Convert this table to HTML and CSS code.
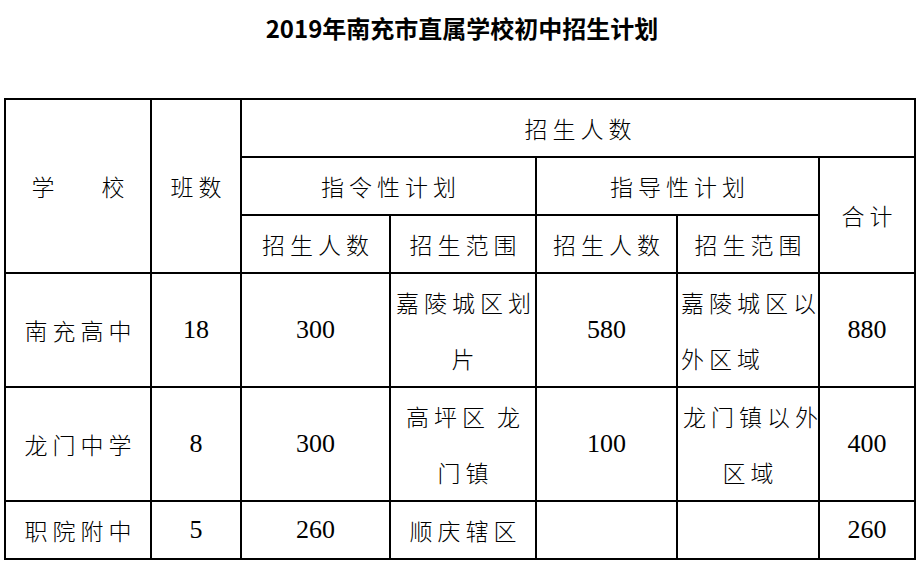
FILE: index.html
```html
<!DOCTYPE html>
<html lang="zh-CN">
<head>
<meta charset="utf-8">
<title>2019年南充市直属学校初中招生计划</title>
<link rel="stylesheet" href="styles.css">
</head>
<body>
<h1 class="title">2019年南充市直属学校初中招生计划</h1>
<table class="plan">
  <colgroup>
    <col class="c1"><col class="c2"><col class="c3"><col class="c4"><col class="c5"><col class="c6"><col class="c7">
  </colgroup>
  <tr class="h">
    <td rowspan="3" class="cn"><span class="school"><span>学</span><span>校</span></span></td>
    <td rowspan="3" class="cn">班数</td>
    <td colspan="5" class="cn">招生人数</td>
  </tr>
  <tr class="h">
    <td colspan="2" class="cn">指令性计划</td>
    <td colspan="2" class="cn">指导性计划</td>
    <td rowspan="2" class="cn">合计</td>
  </tr>
  <tr class="h">
    <td class="cn">招生人数</td>
    <td class="cn">招生范围</td>
    <td class="cn">招生人数</td>
    <td class="cn">招生范围</td>
  </tr>
  <tr class="r1">
    <td class="cn">南充高中</td>
    <td class="num">18</td>
    <td class="num">300</td>
    <td class="cn">嘉陵城区划<br>片</td>
    <td class="num">580</td>
    <td class="cn left">嘉陵城区以<br>外区域</td>
    <td class="num">880</td>
  </tr>
  <tr class="r2">
    <td class="cn">龙门中学</td>
    <td class="num">8</td>
    <td class="num">300</td>
    <td class="cn">高坪区<span class="sp"></span>龙<br>门镇</td>
    <td class="num">100</td>
    <td class="cn">龙门镇以外<br>区域</td>
    <td class="num">400</td>
  </tr>
  <tr class="r3">
    <td class="cn">职院附中</td>
    <td class="num">5</td>
    <td class="num">260</td>
    <td class="cn">顺庆辖区</td>
    <td class="num"></td>
    <td class="num"></td>
    <td class="num">260</td>
  </tr>
</table>
</body>
</html>
```
FILE: styles.css
```css
html, body {
  margin: 0;
  padding: 0;
  background: #fff;
}
body {
  width: 921px;
  color: #000;
}
.title {
  margin: 0;
  padding-top: 12px;
  height: 32px;
  line-height: 32px;
  text-align: center;
  font-family: "Noto Sans CJK SC", sans-serif;
  font-weight: 700;
  font-size: 24px;
  letter-spacing: 0;
  padding-left: 3px;
}
.plan {
  margin: 54px 0 0 4px;
  border-collapse: collapse;
  table-layout: fixed;
  width: 912px;
}
.c1 { width: 146px; }
.c2 { width: 90px; }
.c3 { width: 149px; }
.c4 { width: 146px; }
.c5 { width: 141px; }
.c6 { width: 142px; }
.c7 { width: 96px; }
.plan td {
  border: 2px solid #000;
  padding: 0;
  text-align: center;
  vertical-align: middle;
  line-height: 56px;
  white-space: nowrap;
}
.h { height: 58px; }
.r1 { height: 114px; }
.r2 { height: 113px; }
.r3 { height: 58px; }
.cn {
  font-family: "Noto Sans CJK SC", sans-serif;
  font-weight: 300;
  font-size: 23px;
  letter-spacing: 5px;
  padding-left: 5px !important;
}
.left {
  text-align: left !important;
  padding-left: 3px !important;
}
.num {
  font-family: "Liberation Serif", "Times New Roman", serif;
  font-size: 26px;
}
.school {
  display: inline-flex;
  gap: 47px;
  letter-spacing: 0;
  margin-left: -5px;
}
.sp {
  display: inline-block;
  width: 7px;
}
```
